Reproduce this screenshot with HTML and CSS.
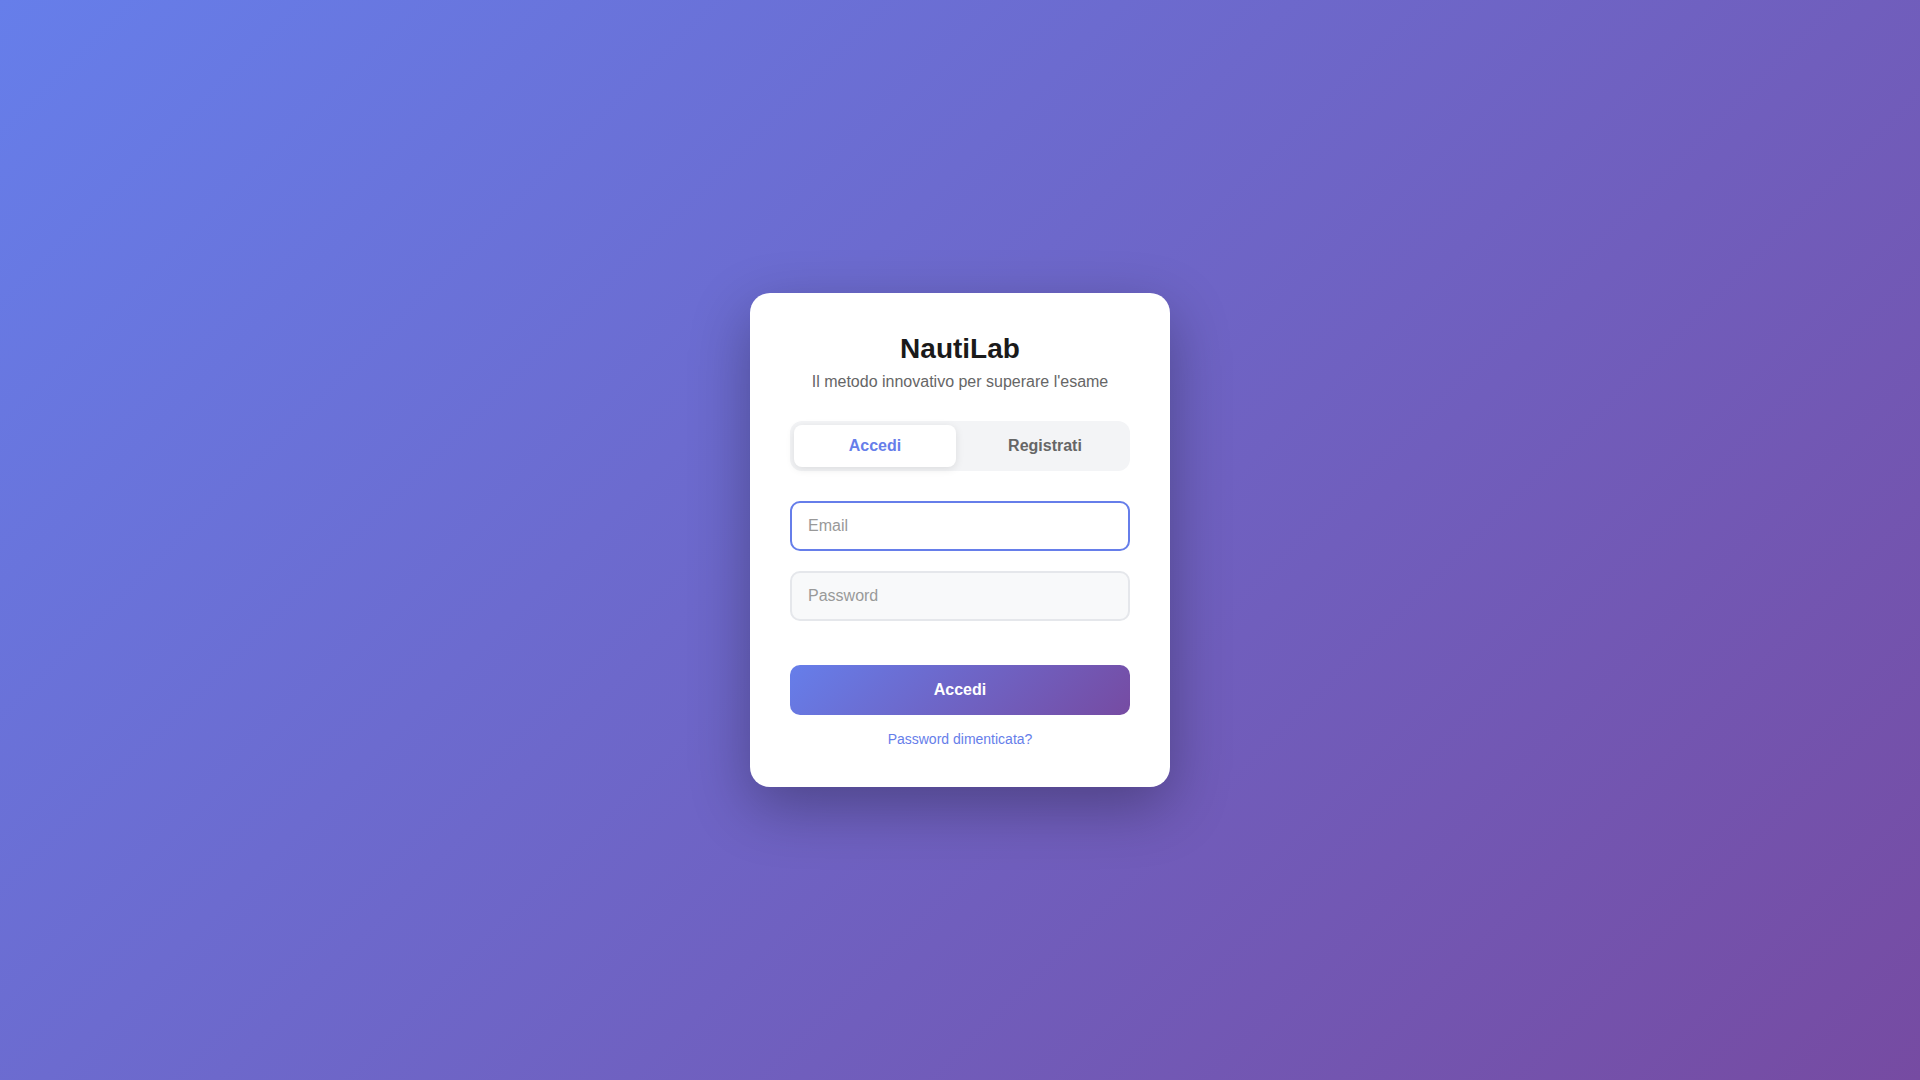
FILE: index.html
```html
<!DOCTYPE html>
<html lang="it">
<head>
<meta charset="utf-8">
<title>NautiLab</title>
<link rel="stylesheet" href="styles.css">
</head>
<body>
<main class="page">
  <section class="card">
    <header class="header">
      <h1 class="title">NautiLab</h1>
      <p class="subtitle">Il metodo innovativo per superare l'esame</p>
    </header>
    <div class="tabs">
      <button class="tab tab-active" type="button">Accedi</button>
      <button class="tab" type="button">Registrati</button>
    </div>
    <form class="form">
      <input class="field field-focus" type="email" placeholder="Email">
      <input class="field" type="password" placeholder="Password">
      <button class="submit" type="button">Accedi</button>
      <a class="forgot" href="#">Password dimenticata?</a>
    </form>
  </section>
</main>
</body>
</html>
```
FILE: styles.css
```css
* { box-sizing: border-box; }
html, body { margin: 0; height: 100%; }
body {
  font-family: "Liberation Sans", Arial, sans-serif;
  background: linear-gradient(135deg, #667eea 0%, #764ba2 100%);
  min-height: 100vh;
}
.page {
  min-height: 100vh;
  display: flex;
  align-items: center;
  justify-content: center;
}
.card {
  width: 420px;
  background: #fff;
  border-radius: 20px;
  padding: 40px;
  box-shadow: 0 20px 60px rgba(0, 0, 0, 0.3);
}
.header { text-align: center; margin-bottom: 30px; }
.title {
  margin: 0 0 8px;
  font-size: 28px;
  font-weight: 700;
  color: #1a1a1a;
  line-height: normal;
}
.subtitle {
  margin: 0;
  font-size: 16px;
  color: #666;
}
.tabs {
  display: flex;
  gap: 8px;
  padding: 4px;
  background: #f3f4f6;
  border-radius: 12px;
  margin-bottom: 30px;
}
.tab {
  flex: 1;
  border: 0;
  background: transparent;
  font-family: inherit;
  font-size: 16px;
  font-weight: 700;
  color: #666;
  padding: 12px 0;
  border-radius: 8px;
  line-height: normal;
  cursor: pointer;
}
.tab-active {
  background: #fff;
  color: #667eea;
  box-shadow: 0 2px 8px rgba(0, 0, 0, 0.1);
}
.form { display: flex; flex-direction: column; }
.field {
  height: 50px;
  width: 100%;
  border: 2px solid #e5e7eb;
  background: #f8f9fa;
  border-radius: 10px;
  padding: 0 16px;
  font-family: inherit;
  font-size: 16px;
  color: #333;
  margin-bottom: 20px;
  outline: none;
}
.field::placeholder { color: #999; }
.field-focus {
  border-color: #667eea;
  background: #fff;
}
.form .field + .field { margin-bottom: 44px; }
.submit {
  height: 50px;
  border: 0;
  border-radius: 10px;
  background: linear-gradient(135deg, #667eea 0%, #764ba2 100%);
  color: #fff;
  font-family: inherit;
  font-size: 16px;
  font-weight: 700;
  cursor: pointer;
}
.forgot {
  margin-top: 16px;
  text-align: center;
  font-size: 14px;
  color: #667eea;
  text-decoration: none;
}
```
